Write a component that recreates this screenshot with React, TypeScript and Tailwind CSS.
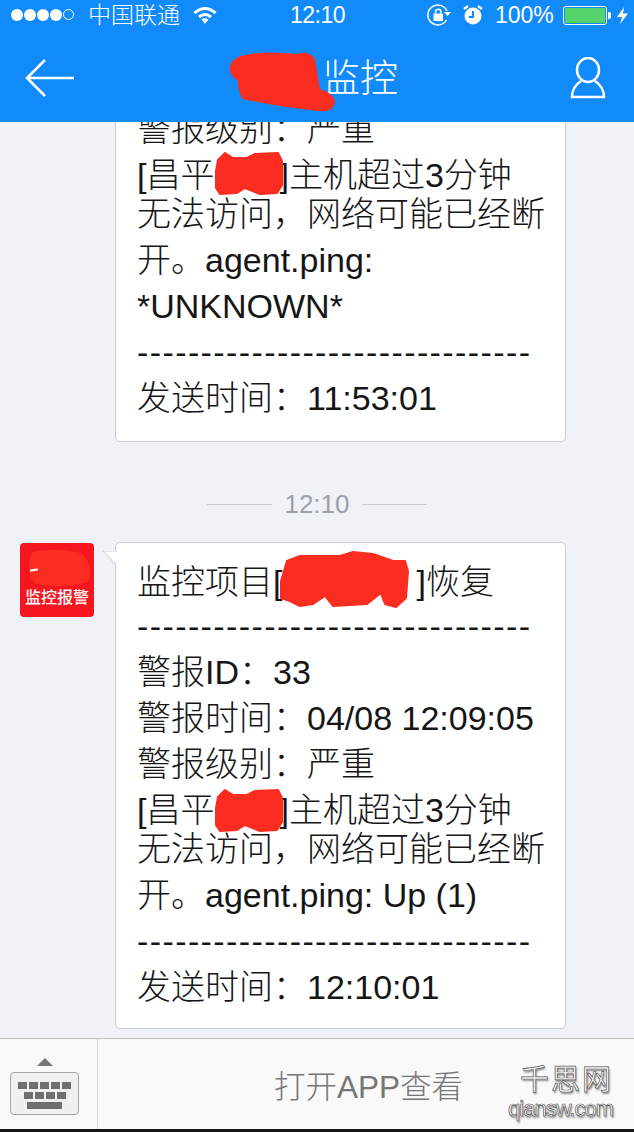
import React from "react";

const DASHES = "-------------------------------";
const SMALL_BLOB =
  "M4 10 L11 3 L19 8 L33 8 L41 4 L64 3 L68 11 L68 35 L63 43 L46 44 L31 38 L23 43 L6 44 L2 38 L2 21 Z";

function Line({ children, tight, dashes, first }: { children: React.ReactNode; tight?: boolean; dashes?: boolean; first?: boolean }) {
  const height = tight ? "h-[39px]" : first ? "h-[44px]" : "h-[46px]";
  return <p className={`${height} ${dashes ? "tracking-[1.4px]" : ""} whitespace-pre leading-[46px]`}>{children}</p>;
}

function Blob({ className, d, viewBox }: { className: string; d: string; viewBox: string }) {
  return (
    <svg className={className} viewBox={viewBox} preserveAspectRatio="none">
      <path d={d} fill="#fb2c20" stroke="#fb2c20" strokeWidth="2" strokeLinejoin="round" />
    </svg>
  );
}

function HiddenHost({ top }: { top: string }) {
  return (
    <div className="relative">
      <Line tight>
        [昌平<span className="inline-block w-[65px]" />]主机超过3分钟
      </Line>
      <Blob className={`absolute left-[77px] h-[46px] w-[70px] ${top}`} viewBox="0 0 70 46" d={SMALL_BLOB} />
    </div>
  );
}

function Bubble({ children, tail }: { children: React.ReactNode; tail?: boolean }) {
  return (
    <div className="relative ml-[115px] w-[451px] rounded-[5px] border border-[#c9cdd3] bg-white pl-[21px] text-[34px] font-light text-[#161616]">
      {tail && (
        <svg className="absolute left-[-13px] top-[8px] h-[18px] w-[14px]" viewBox="0 0 14 18">
          <path d="M14 0 L0 0 L14 14 Z" fill="#ffffff" />
          <path d="M14 0 L0 0 L13 14" fill="none" stroke="#c9cdd3" />
        </svg>
      )}
      {children}
    </div>
  );
}

export default function App() {
  return (
    <div className="flex h-[1132px] w-[634px] flex-col overflow-hidden bg-[#eff2f7] font-['Liberation_Sans','Noto_Sans_CJK_SC',sans-serif]">
      <header className="h-[122px] shrink-0 bg-[#128bfa] text-white">
        <div className="flex h-[30px] items-center pl-[11px] text-[23px]">
          <div className="flex w-[77px] gap-[1px]">
            {[0, 1, 2, 3].map((i) => (
              <span key={i} className="h-[12px] w-[12px] rounded-full bg-white" />
            ))}
            <span className="h-[11px] w-[11px] rounded-full border border-white" />
          </div>
          <span className="w-[105px] font-light">中国联通</span>
          <svg className="h-[17px] w-[24px]" viewBox="0 0 24 17">
            <path d="M1.5 6 Q12 -3 22.5 6 M6 10 Q12 5 18 10" fill="none" stroke="#fff" strokeWidth="3" />
            <path d="M8.5 12.5 Q12 10 15.5 12.5 L12 17 Z" fill="#fff" />
          </svg>
          <span className="ml-[73px] w-[137px] font-medium tracking-[-0.5px]">12:10</span>
          <svg className="h-[22px] w-[24px]" viewBox="0 0 24 22">
            <path d="M19.5 16 A10 10 0 1 1 20 7" fill="none" stroke="#fff" strokeWidth="1.5" />
            <path d="M17 8 H24 L20.5 12 Z" fill="#fff" />
            <rect x="6.5" y="9.5" width="9.5" height="7.5" rx="1" fill="#fff" />
            <path d="M8.5 9.5 V7.5 A2.8 2.8 0 0 1 14 7.5 V9.5" fill="none" stroke="#fff" strokeWidth="1.4" />
          </svg>
          <svg className="ml-[12px] h-[20px] w-[20px]" viewBox="0 0 20 20">
            <circle cx="10" cy="11" r="8.5" fill="#fff" />
            <path d="M10 6 V12 H6" fill="none" stroke="#128bfa" strokeWidth="2" />
            <path d="M1 4 L5 1 M19 4 L15 1" stroke="#fff" strokeWidth="2.2" />
          </svg>
          <span className="ml-[12px] w-[68px]">100%</span>
          <div className="flex h-[19px] w-[44px] rounded-[3px] border border-white p-[1px]">
            <div className="flex-1 rounded-[1px] bg-[#56d36b]" />
          </div>
          <span className="ml-[1px] h-[7px] w-[3px] rounded-r-[2px] bg-white" />
          <svg className="ml-[6px] h-[17px] w-[11px]" viewBox="0 0 11 17">
            <path d="M7 0 L0 10 H5 L3 17 L11 6.5 H6 Z" fill="#fff" />
          </svg>
        </div>
        <div className="relative flex h-[92px] items-center justify-between pl-[25px] pr-[28px] pt-[4px]">
          <svg className="h-[38px] w-[50px]" viewBox="0 0 50 38">
            <path d="M20 1 L2 19 L20 37 M2 19 H49" fill="none" stroke="#fff" strokeWidth="2.5" />
          </svg>
          <span className="absolute left-[322px] top-[24px] text-[38px] font-light leading-[48px]">监控</span>
          <Blob
            className="absolute left-[229px] top-[22px] h-[60px] w-[106px]"
            viewBox="0 0 106 60"
            d="M12 5 Q35 -1 68 3 Q78 -1 85 7 L90 38 Q104 42 105 50 Q103 60 90 58 Q55 55 14 46 Q9 35 10 28 Q0 22 2 14 Q4 8 12 5 Z"
          />
          <svg className="h-[42px] w-[36px]" viewBox="0 0 36 42">
            <ellipse cx="18" cy="13" rx="11" ry="12" fill="none" stroke="#fff" strokeWidth="2.5" />
            <path d="M11 24 C5 28 2 33 2 40 H34 C34 33 31 28 25 24" fill="none" stroke="#fff" strokeWidth="2.5" />
          </svg>
        </div>
      </header>

      <main className="flex min-h-0 flex-1 flex-col justify-end overflow-hidden pb-[9px]">
        <Bubble>
          <Line>无法访问，网络可能已经断</Line>
          <Line>警报级别：严重</Line>
          <HiddenHost top="top-[-2px]" />
          <Line>无法访问，网络可能已经断</Line>
          <Line>开。agent.ping:</Line>
          <Line>*UNKNOWN*</Line>
          <Line dashes>{DASHES}</Line>
          <Line>发送时间：11:53:01</Line>
          <div className="h-[20px]" />
        </Bubble>

        <div className="flex h-[100px] shrink-0 items-center justify-center gap-[12px] pt-[24px] text-[26px] text-[#9ca1a7]">
          <span className="h-px w-[65px] bg-[#c8cbd0]" />
          <span>12:10</span>
          <span className="h-px w-[65px] bg-[#c8cbd0]" />
        </div>

        <div className="relative">
          <div className="absolute left-[20px] top-px flex h-[74px] w-[74px] flex-col items-center justify-end overflow-hidden rounded-[4px] bg-[#f6161f] pb-[9px]">
            <Blob
              className="absolute left-[7px] top-[6px] h-[38px] w-[65px]"
              viewBox="0 0 65 38"
              d="M6 4 Q30 -1 54 5 Q66 16 60 32 Q30 40 8 33 Q-1 20 6 4 Z"
            />
            <span className="absolute left-[10px] top-[26px] h-[2px] w-[8px] -rotate-12 bg-white" />
            <span className="relative text-[16px] font-medium leading-[20px] text-white">监控报警</span>
          </div>
          <Bubble tail>
            <div className="h-[16px]" />
            <div className="relative">
              <Line first>
                监控项目[<span className="inline-block w-[134px]" />]恢复
              </Line>
              <Blob
                className="absolute left-[142px] top-[-9px] h-[58px] w-[130px]"
                viewBox="0 0 130 58"
                d="M8 11 L21 6 L61 6 L74 2 L94 4 L114 11 L126 11 L129 21 L127 48 L117 57 L106 54 L102 43 L88 54 L54 56 L46 46 L34 54 L21 56 L11 51 L2 48 L2 31 Z"
              />
            </div>
            <Line dashes>{DASHES}</Line>
            <Line>警报ID：33</Line>
            <Line>警报时间：04/08 12:09:05</Line>
            <Line>警报级别：严重</Line>
            <HiddenHost top="top-0" />
            <Line>无法访问，网络可能已经断</Line>
            <Line>开。agent.ping: Up (1)</Line>
            <Line dashes>{DASHES}</Line>
            <Line>发送时间：12:10:01</Line>
            <div className="h-[18px]" />
          </Bubble>
        </div>
      </main>

      <footer className="relative flex h-[94px] shrink-0 border-t border-[#c2c2c2] bg-[#f9f9f9]">
        <div className="flex w-[98px] flex-col items-start border-r border-[#d5d5d5] pl-[10px] pt-[19px]">
          <span className="ml-[27px] h-0 w-0 border-x-[8px] border-b-[8px] border-x-transparent border-b-[#777]" />
          <div className="mt-[6px] flex h-[43px] w-[69px] shrink-0 flex-col items-center gap-[3px] rounded-[4px] border border-[#a5a5a5] bg-[#f0f0f0] pt-[9px]">
            <div className="flex gap-[2px]">
              {[0, 1, 2, 3, 4].map((i) => (
                <span key={i} className="h-[7px] w-[9px] bg-[#6f6f6f]" />
              ))}
            </div>
            <div className="flex gap-[2px]">
              {[0, 1, 2, 3].map((i) => (
                <span key={i} className="h-[7px] w-[9px] bg-[#6f6f6f]" />
              ))}
            </div>
            <span className="h-[7px] w-[35px] bg-[#6f6f6f]" />
          </div>
        </div>
        <div className="flex flex-1 items-center pl-[176px] pt-[4px] text-[31.5px] font-light text-[#777]">打开APP查看</div>
        <div className="absolute right-[21px] top-[26px] flex flex-col items-end text-white [-webkit-text-stroke:0.7px_#555] [text-shadow:1px_2px_2px_rgba(0,0,0,0.45)]">
          <span className="text-[29px] leading-[30px] tracking-[2px]">千思网</span>
          <span className="text-[22px] leading-[28px] tracking-[-1px]">qiansw.com</span>
        </div>
        <div className="absolute inset-x-0 bottom-0 h-[3px] bg-[#151515]" />
      </footer>
    </div>
  );
}
